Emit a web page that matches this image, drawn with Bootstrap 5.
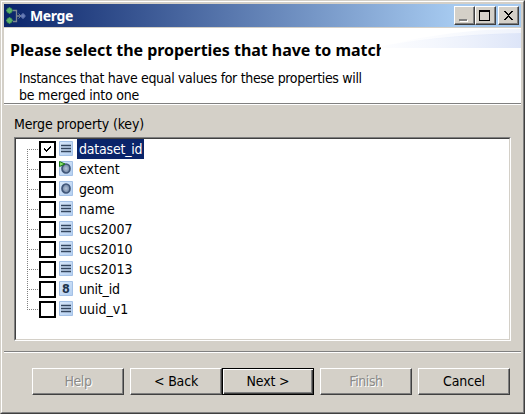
<!DOCTYPE html>
<html lang="en">
<head>
<meta charset="utf-8">
<title>Merge</title>
<link href="https://cdn.jsdelivr.net/npm/bootstrap@5.3.0/dist/css/bootstrap.min.css" rel="stylesheet">
<style>
body{width:525px;height:414px;overflow:hidden;background:#d4d0c8;color:#000;font:14px/20px "DejaVu Sans Condensed","DejaVu Sans",sans-serif;font-stretch:condensed;white-space:nowrap}
.win{width:525px;height:414px;border:1px solid;border-color:#d4d0c8 #404040 #404040 #d4d0c8}
.win-in{height:412px;border:1px solid;border-color:#fff #808080 #808080 #fff;padding:2px}
.titlebar{height:23px;background:linear-gradient(90deg,#0a246a,#a6caf0 87%);padding:0 2px}
.logo{margin-top:2px}
.caption{color:#fff;font:bold 14px/23px "Noto Sans",sans-serif;margin-left:4px;letter-spacing:-.4px}
.tbs{padding-top:2px}
.tb{width:21px;height:19px;background:#d4d0c8;border:1px solid;border-color:#fff #404040 #404040 #fff;box-shadow:inset -1px -1px #808080}
.tb.quit{margin-left:2px}
.tb svg{display:block}
.head{height:77px;border-top:1px solid #d4d0c8;border-bottom:1px solid #808080;background:#fff}
.swoosh{right:0;top:0}
.headline{font:bold 16px/22px "Noto Sans",sans-serif;width:371px;overflow:hidden;margin:11px 0 0 6px;letter-spacing:-.04px}
.desc{margin:9px 0 0 15px;line-height:17px;letter-spacing:-.33px}
.desc-2{letter-spacing:-.22px}
.content{border-top:1px solid #fff;height:248px;border-bottom:1px solid #808080;padding:9px 10px 0}
.key{letter-spacing:-.15px}
.tree{height:204px;background:#fff;border:1px solid;border-color:#808080 #fff #fff #808080;margin-top:3px}
.tree-in{height:202px;border:1px solid;border-color:#404040 #d4d0c8 #d4d0c8 #404040}
.item{height:20px;padding-left:11px}
.branch{width:12px;height:20px;background:repeating-linear-gradient(90deg,#808080 0 1px,transparent 1px 2px) 0 10px/12px 1px no-repeat,repeating-linear-gradient(#808080 0 1px,transparent 1px 2px) 0 0/1px 20px no-repeat}
.item:first-child .branch{background-position:0 10px,0 10px}
.item:last-child .branch{background-size:12px 1px,1px 10px}
.box{width:17px;height:17px;border:2px solid #000;margin-top:2px}
.box svg,.ico{display:block}
.ico{margin:2px 4px 0 3px}
.lab{padding:0 2px;height:20px;line-height:20px}
.lab.tight{letter-spacing:-.2px}
.picked{background:#0a246a;color:#fff}
.foot{border-top:1px solid #fff;padding:15px 11px 0 28px}
.push{width:92px;height:27px;border:1px solid;border-color:#fff #404040 #404040 #fff;box-shadow:inset -1px -1px #808080;text-align:center;line-height:25px;letter-spacing:-.15px}
.push.off{color:#8a8a88;text-shadow:1px 1px #fff;letter-spacing:-.4px}
.push.main{border-color:#000;box-shadow:inset 1px 1px #fff,inset -1px -1px #404040,inset -2px -2px #808080}
.push.gap-l{margin-left:6px}
</style>
<script src="https://cdn.jsdelivr.net/npm/bootstrap@5.3.0/dist/js/bootstrap.bundle.min.js"></script>
</head>
<body>
<svg width="0" height="0" class="position-absolute">
<defs>
<linearGradient id="tile" x2="1" y2="1"><stop stop-color="#d9e8fa"/><stop offset="1" stop-color="#b4cff0"/></linearGradient>
<radialGradient id="orb"><stop stop-color="#b4c3d6"/><stop offset="1" stop-color="#6d82a2"/></radialGradient>
<linearGradient id="fade"><stop stop-color="#e4eafa" stop-opacity="0"/><stop offset=".35" stop-color="#e8eefb" stop-opacity=".4"/><stop offset="1" stop-color="#dde5f8"/></linearGradient>
<g id="base"><path d="M.5.5h13v14H.5z" fill="url(#tile)" stroke="#a4c1e6"/></g>
<g id="lines"><use href="#base"/><path d="M2 4.500h10M2 7.500h10M2 10.500h10" stroke="#34465e" stroke-width="1.300"/></g>
<g id="geo"><use href="#base"/><ellipse cx="7" cy="7.500" rx="4" ry="4.500" fill="url(#orb)" stroke="#405678" stroke-width="1.700"/></g>
<g id="ext"><use href="#geo"/><path d="M0.500 .5L6 3 .5 5.500z" fill="#8ae06a" stroke="#187818"/></g>
<g id="num"><use href="#base"/><text x="7" y="12" text-anchor="middle" font-family="DejaVu Sans" font-weight="bold" font-size="12.500" fill="#20344c">8</text></g>
</defs>
</svg>
<div class="win"><div class="win-in">
<div class="titlebar d-flex">
<svg class="logo" width="20" height="20" viewBox="0 0 20 20"><path d="M7 4.500h3.500v11H7M10 10h4" fill="none" stroke="#7d8790" stroke-width="1.300"/><path d="M12.500 7.500l2.500 2.500-2.500 2.500" fill="none" stroke="#8b96a2" stroke-width=".8"/><g fill="#62b56c" stroke="#327f50" stroke-width=".8"><circle cx="3.500" cy="4.500" r="2.800"/><circle cx="3.500" cy="14.500" r="2.800"/></g><path d="M3.500 1.500v6M.5 4.500h6M3.500 11.500v6M.5 14.500h6" stroke="#5bb068"/><circle cx="17" cy="10" r="2" fill="#5d72ad" stroke="#5268a6" stroke-width=".8"/><path d="M17 7v6M14.500 10h5" stroke="#7286be" stroke-width=".8"/></svg>
<span class="caption">Merge</span>
<div class="tbs ms-auto d-flex">
<div class="tb"><svg width="19" height="17"><path d="M5 13h8v2H5z" fill="#fff"/><path d="M4 12h8v2H4z" fill="#808080"/></svg></div>
<div class="tb"><svg width="19" height="17" shape-rendering="crispEdges"><path d="M3 3h11v11H3zm1 2v8h9V5z" fill="#000" fill-rule="evenodd"/></svg></div>
<div class="tb quit"><svg width="19" height="17" shape-rendering="crispEdges"><path d="M5 4h2v1h1v1h1v1h1V6h1V5h1V4h2v1h-1v1h-1v1h-1v1h-1v1h1v1h1v1h1v1h1v1h-2v-1h-1v-1h-1v-1H9v1H8v1H7v1H5v-1h1v-1h1v-1h1V9h1V8H8V7H7V6H6V5H5z" fill="#000"/></svg></div>
</div>
</div>
<header class="head position-relative overflow-hidden">
<svg class="swoosh position-absolute" width="150" height="20"><path d="M0 20Q65 7 150 5V20z" fill="url(#fade)"/><path d="M20 16Q85 1 150 1V6Q85 7 20 16z" fill="url(#fade)" opacity=".5"/></svg>
<h1 class="headline position-relative">Please select the properties that have to match</h1>
<p class="desc position-relative">Instances that have equal values for these properties will<br><span class="desc-2">be merged into one</span></p>
</header>
<main class="content">
<div class="key">Merge property (key)</div>
<div class="tree"><div class="tree-in">
<div class="item d-flex"><i class="branch"></i><div class="box"><svg width="13" height="13" shape-rendering="crispEdges"><path d="M3 5h1v1h1v1h1V6h1V5h1V4h1V3h1v2H9v1H8v1H7v1H6v1H5V8H4V7H3z"/></svg></div><svg class="ico" width="14" height="15"><use href="#lines"/></svg><span class="lab tight picked">dataset_id</span></div>
<div class="item d-flex"><i class="branch"></i><div class="box"></div><svg class="ico" width="14" height="15"><use href="#ext"/></svg><span class="lab">extent</span></div>
<div class="item d-flex"><i class="branch"></i><div class="box"></div><svg class="ico" width="14" height="15"><use href="#geo"/></svg><span class="lab tight">geom</span></div>
<div class="item d-flex"><i class="branch"></i><div class="box"></div><svg class="ico" width="14" height="15"><use href="#lines"/></svg><span class="lab">name</span></div>
<div class="item d-flex"><i class="branch"></i><div class="box"></div><svg class="ico" width="14" height="15"><use href="#lines"/></svg><span class="lab">ucs2007</span></div>
<div class="item d-flex"><i class="branch"></i><div class="box"></div><svg class="ico" width="14" height="15"><use href="#lines"/></svg><span class="lab">ucs2010</span></div>
<div class="item d-flex"><i class="branch"></i><div class="box"></div><svg class="ico" width="14" height="15"><use href="#lines"/></svg><span class="lab">ucs2013</span></div>
<div class="item d-flex"><i class="branch"></i><div class="box"></div><svg class="ico" width="14" height="15"><use href="#num"/></svg><span class="lab tight">unit_id</span></div>
<div class="item d-flex"><i class="branch"></i><div class="box"></div><svg class="ico" width="14" height="15"><use href="#lines"/></svg><span class="lab">uuid_v1</span></div>
</div></div>
</main>
<footer class="foot d-flex">
<div class="push off">Help</div><div class="push gap-l">&lt; Back</div><div class="push main">Next &gt;</div><div class="push off gap-l">Finish</div><div class="push gap-l">Cancel</div>
</footer>
</div></div>
</body>
</html>
